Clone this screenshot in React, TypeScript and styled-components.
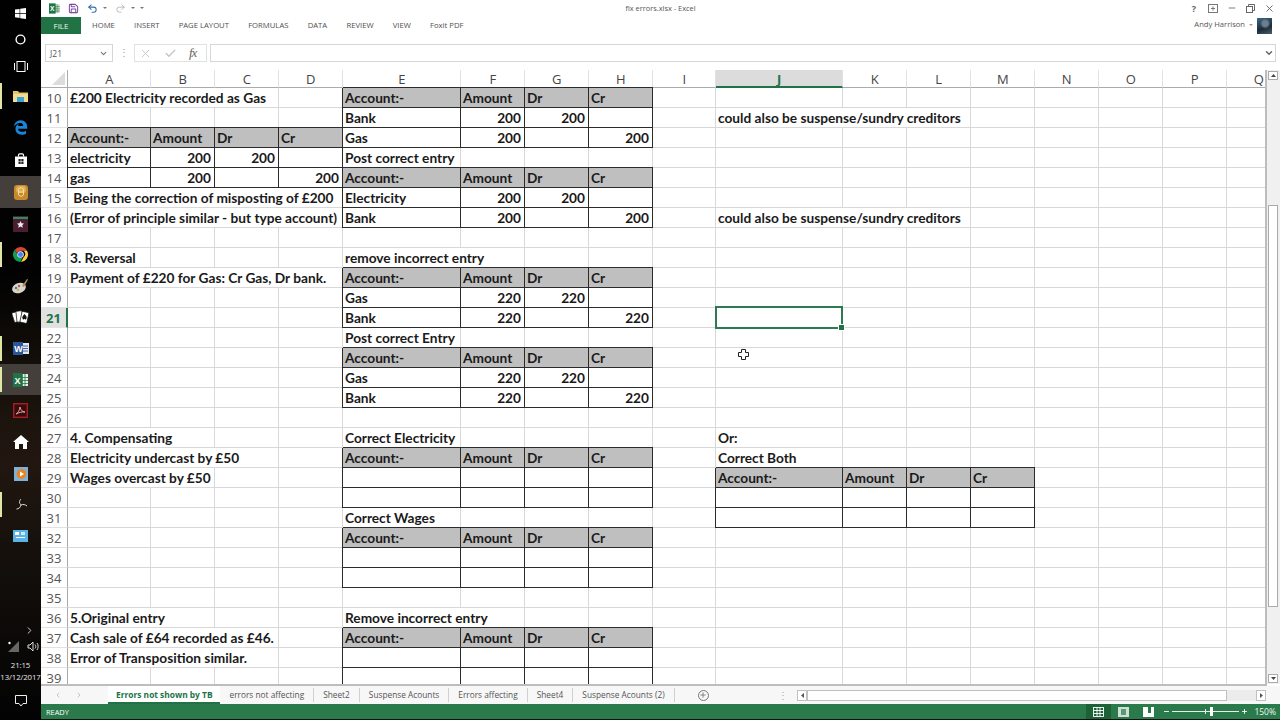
import React from "react";
import styled, { createGlobalStyle } from "styled-components";
import { Undo2, Redo2, Save, X, Check, Minus, ChevronDown, ChevronRight, ChevronLeft, Plus } from "lucide-react";
import { FaEdgeLegacy } from "react-icons/fa6";

const Global = createGlobalStyle`
  html, body { margin: 0; padding: 0; background: #fff; overflow: hidden; }
  * { box-sizing: border-box; }
`;

const Desktop = styled.div`
  width: 1280px; height: 720px; display: flex; overflow: hidden; position: relative;
  font-family: "Open Sans", "Liberation Sans", sans-serif;
`;

/* ---------- Windows taskbar ---------- */
const Taskbar = styled.aside`
  width: 41px; height: 720px; flex: none; display: flex; flex-direction: column; align-items: stretch;
  background: linear-gradient(180deg, #010101 0%, #020202 38%, #15100a 52%, #221710 64%, #120e0b 80%, #030303 100%);
  color: #fff;
`;
const Slot = styled.div<{ $h: number; $hi?: boolean; $active?: boolean }>`
  height: ${p => p.$h}px; flex: none; display: flex; align-items: center; justify-content: center; position: relative;
  background: ${p => (p.$hi ? "#443f3a" : "transparent")};
  &::before {
    content: ""; display: ${p => (p.$active ? "block" : "none")};
    position: absolute; left: 0; top: 3px; bottom: 3px; width: 2px; background: #dfe6a6;
  }
`;
const Tray = styled.div`
  margin-top: auto; display: flex; flex-direction: column; align-items: center; padding-bottom: 11px;
`;
const TrayIcons = styled.div`
  display: flex; gap: 8px; align-items: center; height: 16px; margin-bottom: 5px; margin-left: 5px;
`;
const Clock = styled.div`
  font-size: 7.8px; line-height: 12px; text-align: center; color: #e8e8e8; white-space: nowrap; letter-spacing: -0.1px;
`;
const Notify = styled.div`
  margin-top: 10px; height: 16px; display: flex; align-items: center;
`;

/* ---------- Excel window ---------- */
const Main = styled.main`
  flex: 1; min-width: 0; height: 720px; display: flex; flex-direction: column; background: #fff;
`;
const TitleBar = styled.header`
  height: 17px; padding-bottom: 1px; flex: none; display: grid; grid-template-columns: 1fr auto 1fr; align-items: center;
`;
const Qat = styled.div`
  display: flex; align-items: center; padding-left: 8px; gap: 8px;
`;
const QatCaret = styled.span`
  width: 0; height: 0; border-left: 2px solid transparent; border-right: 2px solid transparent; border-top: 2px solid #777;
  margin-left: -3px;
`;
const DocTitle = styled.div`
  font-size: 7.4px; color: #555; white-space: nowrap;
`;
const WinControls = styled.div`
  display: flex; justify-content: flex-end; align-items: center; gap: 9px; padding-right: 5px; color: #555;
`;
const WinGlyph = styled.span`
  width: 10px; height: 10px; display: flex; align-items: center; justify-content: center; font-size: 9px; font-weight: 700; color: #666;
`;
const Ribbon = styled.nav`
  height: 17px; flex: none; display: flex; align-items: center;
`;
const FileTab = styled.div`
  width: 40px; height: 17px; background: #217346; color: #e9f3ec; font-size: 8px; display: flex; align-items: center; justify-content: center;
`;
const RibbonTabs = styled.div`
  display: flex; gap: 19.2px; margin: -2px 0 0 11px;
`;
const RibbonTab = styled.span`
  font-size: 7.7px; color: #4f4f4f; white-space: nowrap;
`;
const User = styled.div`
  margin-left: auto; display: flex; align-items: center; gap: 4px; padding-right: 8px; font-size: 7.6px; color: #555;
`;
const UserName = styled.span`
  margin-top: -3px;
`;
const UserCaret = styled.span`
  width: 0; height: 0; margin-top: -2px; border-left: 2px solid transparent; border-right: 2px solid transparent; border-top: 2px solid #999;
`;
const Avatar = styled.div`
  width: 15px; height: 16px; background: radial-gradient(circle at 55% 35%, #6f7f8c 0 20%, transparent 40%), linear-gradient(160deg, #3d6a8a, #1b2a36 60%, #49606a);
`;
const FormulaBar = styled.section`
  height: 18px; margin-top: 10px; flex: none; display: flex; align-items: stretch; padding: 0 4px; background: #fff;
`;
const NameBox = styled.div`
  width: 68px; border: 1px solid #d6d6d6; display: flex; align-items: center; justify-content: space-between; padding: 0 4px; font-size: 8.5px; color: #555;
`;
const Grip = styled.div`
  width: 21px; text-align: center; color: #9a9a9a; font-size: 10px; line-height: 16px;
`;
const FxBox = styled.div`
  width: 73px; border: 1px solid #e2e2e2; display: flex; align-items: center; gap: 12px; padding: 0 0 0 4px;
`;
const FxMark = styled.span`
  font-family: "Liberation Serif", serif; font-style: italic; font-size: 13px; color: #666; letter-spacing: -1px;
`;
const FormulaInput = styled.div`
  flex: 1; margin-left: 3px; border: 1px solid #d6d6d6; display: flex; align-items: center; justify-content: flex-end; padding-right: 1px; color: #666;
`;
const SheetRow = styled.div`
  margin-top: 8px; height: 616px; flex: none; display: flex;
`;
const Sheet = styled.div`
  width: 1227px; height: 616px; overflow: hidden; display: grid; position: relative; border-right: 2px solid #bdbdbd;
  border-bottom: 2px solid #bdbdbd;
  grid-template-columns: 27px 83px 64px 64px 64px 118px 64px 64px 64px 63px 127px 64px 64px 64px 64px 64px 64px 64px;
  grid-template-rows: 18px;
  grid-auto-rows: 20px;
  font-family: Lato, "Liberation Sans", sans-serif;
`;
const Corner = styled.div`
  border-bottom: 1px solid #ababab; border-right: 1px solid #ababab; display: flex; justify-content: flex-end; align-items: flex-end; padding: 0 2px 2px 0;
`;
const Triangle = styled.div`
  width: 0; height: 0; border-left: 13px solid transparent; border-bottom: 13px solid #dcdcdc;
`;
const ColHead = styled.div<{ $sel?: boolean }>`
  display: flex; align-items: center; justify-content: center; font-family: "Open Sans", sans-serif; font-size: 13px; padding: 1px 0 0 0.5px;
  color: ${p => (p.$sel ? "#217346" : "#444")}; font-weight: ${p => (p.$sel ? 700 : 400)};
  background: ${p => (p.$sel ? "#dcdcdc" : "#fff")};
  border-right: 1px solid #e2e2e2;
  border-bottom: ${p => (p.$sel ? "2px solid #217346" : "1px solid #ababab")};
`;
const RowHead = styled.div<{ $sel?: boolean }>`
  display: flex; align-items: center; justify-content: center; font-family: "Open Sans", sans-serif; font-size: 13px;
  color: ${p => (p.$sel ? "#217346" : "#555")}; font-weight: ${p => (p.$sel ? 700 : 400)};
  background: ${p => (p.$sel ? "#e1e1e1" : "#fff")};
  border-bottom: 1px solid #e2e2e2;
  border-right: ${p => (p.$sel ? "2px solid #217346" : "1px solid #ababab")};
`;
const Cell = styled.div<{ $span: number; $box?: boolean; $fill?: boolean; $num?: boolean; $sel?: boolean }>`
  grid-column: span ${p => p.$span};
  position: relative; white-space: pre; line-height: 20px; padding: 0 ${p => (p.$num ? 3 : 2)}px 0 2px; font-weight: 700; font-size: 13.7px; color: #1a1a1a;
  text-align: ${p => (p.$num ? "right" : "left")};
  background: ${p => (p.$fill ? "#bfbfbf" : "transparent")};
  border-right: 1px solid ${p => (p.$box ? "#2b2b2b" : "#d8d8d8")};
  border-bottom: 1px solid ${p => (p.$box ? "#2b2b2b" : "#d8d8d8")};
  box-shadow: ${p => (p.$box ? "-1px 0 0 #2b2b2b, 0 -1px 0 #2b2b2b" : "none")};
  &::after {
    content: ""; display: ${p => (p.$sel ? "block" : "none")};
    position: absolute; left: -1px; right: -1px; top: -2px; bottom: -2px; border: 2px solid #2f7a52; z-index: 2;
  }
  &::before {
    content: ""; display: ${p => (p.$sel ? "block" : "none")};
    position: absolute; right: -3px; bottom: -4px; width: 5px; height: 5px; background: #217346; border: 1px solid #fff; z-index: 3;
  }
`;
const CursorMark = styled.svg`
  position: absolute; left: 738px; top: 349px; z-index: 5;
`;
const VScroll = styled.div`
  flex: 1; background: #f0f0f0; display: flex; flex-direction: column; align-items: center; padding: 1px 2px 1px 1px; margin-bottom: 2px;
`;
const VButton = styled.div`
  width: 10px; height: 9px; background: #fff; border: 1px solid #ababab; display: flex; align-items: center; justify-content: center; flex: none;
`;
const VThumb = styled.div`
  width: 10px; height: 402px; margin-top: 125px; margin-bottom: auto; background: #fff; border: 1px solid #ababab;
`;
const TabBar = styled.div`
  height: 18px; flex: none; display: flex; align-items: center; background: #f7f7f7;
`;
const TabNav = styled.div`
  width: 67px; display: flex; justify-content: center; gap: 13px; color: #aaa; padding-right: 12px; flex: none;
`;
const ActiveTab = styled.div`
  height: 18px; padding: 0 7px 0 8px; margin-right: 1px; display: flex; align-items: center; white-space: nowrap; font-size: 8.4px;
  font-weight: 700; color: #217346; background: #fff; border-bottom: 2px solid #217346;
`;
const SheetTab = styled.div`
  height: 18px; padding: 0 9px 2px; display: flex; align-items: center; white-space: nowrap; font-size: 8.3px; color: #555;
`;
const TabSep = styled.span`
  width: 1px; height: 14px; background: #d0d0d0; flex: none;
`;
const AddSheet = styled.div`
  margin-left: 23px; width: 11px; height: 11px; border-radius: 50%; border: 1px solid #777; display: flex; align-items: center; justify-content: center; color: #555;
`;
const HScrollGrip = styled.span`
  margin-left: auto; margin-right: 9px; color: #aaa; font-size: 10px; line-height: 16px;
`;
const HScroll = styled.div`
  width: 469px; height: 11px; margin-right: 14px; display: flex; align-items: stretch; background: #ececec;
`;
const HButton = styled.div`
  width: 10px; background: #fff; border: 1px solid #c0c0c0; display: flex; align-items: center; justify-content: center; color: #555; flex: none;
`;
const HThumb = styled.div`
  width: 420px; background: #fff; border: 1px solid #c0c0c0; margin-right: auto;
`;
const StatusBar = styled.footer`
  height: 15px; flex: none; background: #2a7a4b; color: #fff; display: flex; align-items: center; font-size: 7.4px; padding-left: 5px;
`;
const StatusRight = styled.div`
  margin-left: auto; display: flex; align-items: center; height: 15px; padding-right: 4px;
`;
const ViewBtn = styled.div<{ $on?: boolean }>`
  width: 25px; height: 15px; display: flex; align-items: center; justify-content: center; background: ${p => (p.$on ? "#1d6237" : "transparent")};
`;
const Zoom = styled.div`
  display: flex; align-items: center; margin-left: 2px; gap: 2px;
`;
const Track = styled.div`
  width: 67px; height: 1px; background: #e5efe8; position: relative;
`;
const Knob = styled.span`
  position: absolute; left: 38px; top: -4px; width: 3px; height: 9px; background: #fff;
`;
const Tick = styled.span`
  position: absolute; left: 33px; top: -2px; width: 1px; height: 5px; background: #e5efe8;
`;
const Percent = styled.span`
  font-size: 8.5px; margin-left: 6px; color: #f0f5f1;
`;
const BottomEdge = styled.div`
  height: 1px; flex: none; background: #111;
`;

const Win = () => (
  <svg width="11" height="11" viewBox="0 0 11 11"><path fill="#fff" d="M0 1.6 4.6.9v4.2H0zM5.2.8 11 0v5.1H5.2zM0 5.8h4.6V10L0 9.3zM5.2 5.8H11V11l-5.8-.8z" /></svg>
);
const Circle = () => (
  <svg width="11" height="11" viewBox="0 0 11 11"><circle cx="5.5" cy="5.5" r="4.4" fill="none" stroke="#fff" strokeWidth="1.4" /></svg>
);
const TaskView = () => (
  <svg width="14" height="11" viewBox="0 0 14 11" fill="none" stroke="#fff"><rect x="3" y=".5" width="8" height="10" /><path d="M.5 2v7M13.5 2v7" /></svg>
);
const Folder = () => (
  <svg width="15" height="13" viewBox="0 0 15 13"><path fill="#e7c565" d="M0 1h5l1 1.5h9V12H0z" /><path fill="#f4dc8f" d="M0 4h15v8H0z" /><path fill="#3aa6d8" d="M4 7h7v5H4z" /></svg>
);
const Store = () => (
  <svg width="14" height="14" viewBox="0 0 14 14"><path fill="none" stroke="#fff" strokeWidth="1.2" d="M4.5 3.5V2a1.2 1.2 0 0 1 1.2-1.2h2.6A1.2 1.2 0 0 1 9.500 2v1.500" /><path fill="#fff" d="M1 3.500h12V14H1z" /><path fill="#222" d="M4.500 6h2.200v2.200H4.500zM7.300 6h2.200v2.200H7.300zM4.500 8.800h2.200V11H4.500zM7.300 8.800h2.200V11H7.300z" /></svg>
);
const Honey = () => (
  <svg width="14" height="15" viewBox="0 0 14 15"><rect width="14" height="15" rx="3" fill="#c8892c" /><rect x="2" y="1" width="10" height="7" rx="3" fill="#e2ad52" /><path fill="none" stroke="#f3dc9c" d="M4.500 4 7 2.500 9.500 4v6L7 11.500 4.500 10zM4.500 7h5" /></svg>
);
const Star = () => (
  <svg width="15" height="16" viewBox="0 0 15 16"><rect width="15" height="16" fill="#4a1d33" /><rect y="1" width="15" height="2" fill="#2f8a58" /><path fill="#eee" d="M7.500 5l1 2.300 2.500.2-1.800 1.700.6 2.500-2.300-1.300-2.300 1.300.6-2.500L4 7.500l2.500-.2z" /></svg>
);
const Chrome = () => (
  <svg width="15" height="15" viewBox="0 0 24 24">
    <path fill="#db4437" d="M12 0a12 12 0 0 1 10.400 6H12a6 6 0 0 0-5.700 4L2.800 4.300A12 12 0 0 1 12 0z" />
    <path fill="#ffcd40" d="M22.400 6A12 12 0 0 1 12.700 24l4.500-8a6 6 0 0 0-.5-10z" />
    <path fill="#0f9d58" d="M2.800 4.300l5 8.700a6 6 0 0 0 7 4.400L11.800 24A12 12 0 0 1 2.800 4.300z" />
    <circle cx="12" cy="12" r="4.800" fill="#4285f4" stroke="#fff" strokeWidth="1.300" />
  </svg>
);
const Palette = () => (
  <svg width="17" height="16" viewBox="0 0 17 16"><ellipse cx="7" cy="10" rx="7" ry="5" transform="rotate(-20 7 10)" fill="#d5d5cf" /><circle cx="4" cy="10" r="1.300" fill="#3f7fc0" /><circle cx="7" cy="8" r="1.200" fill="#c94f3d" /><circle cx="6" cy="12" r="1.200" fill="#e0b040" /><path d="M10 8 15 1l1 .6L12 9z" fill="#b48a4a" /></svg>
);
const Cards = () => (
  <svg width="18" height="15" viewBox="0 0 18 15"><g stroke="#111" strokeWidth=".7" fill="#fff"><rect x="1" y="2" width="6" height="10" rx="1" transform="rotate(-18 4 7)" /><rect x="4.500" y="1" width="6" height="11" rx="1" transform="rotate(-6 7 7)" /><rect x="9" y="2" width="7" height="11" rx="1" transform="rotate(12 13 7)" /></g><path d="M12.500 4c1.500 2 3 3 1.800 5-.8 1-1.500.3-1.800-.2-.3.500-1 1.200-1.800.2-1.200-2 .300-3 1.800-5z" fill="#111" /></svg>
);
const OfficeText = styled.text`
  font-family: "Liberation Sans", sans-serif; font-size: 9px; font-weight: 700; fill: #fff;
`;
const Word = () => (
  <svg width="16" height="15" viewBox="0 0 16 15"><rect x="8" y="2" width="8" height="11" fill="#dfe7f2" /><path d="M10 5h5M10 7.500h5M10 10h5" stroke="#3f68a6" /><rect y="1" width="10" height="13" fill="#2b579a" /><OfficeText x="1.300" y="11">W</OfficeText></svg>
);
const Excel = ({ small }: { small?: boolean }) => (
  <svg width={small ? 11 : 15} height={small ? 11 : 14} viewBox="0 0 15 14"><rect x="7" y="1" width="8" height="12" fill="#e5f0ea" /><path d="M9.500 1v12M12 1v12M7 4.500h8M7 7.500h8M7 10.500h8" stroke="#217346" strokeWidth=".8" /><rect y="0" width="9" height="14" fill="#217346" /><OfficeText x="1.500" y="10.500">X</OfficeText></svg>
);
const Pdf = () => (
  <svg width="15" height="15" viewBox="0 0 15 15"><rect x=".7" y=".7" width="13.600" height="13.600" fill="#3a0b0d" stroke="#a31f24" strokeWidth="1.400" /><path d="M3 11c2-1 3.500-3.500 4-7 .5 3 2 4.500 5 5-3-.2-6 .3-9 2z" fill="none" stroke="#e9a0a0" /></svg>
);
const Home = () => (
  <svg width="16" height="14" viewBox="0 0 16 14"><path fill="#fff" d="M8 0 16 7h-2v7h-4V9H6v5H2V7H0z" /></svg>
);
const Player = () => (
  <svg width="14" height="14" viewBox="0 0 14 14"><rect width="14" height="14" fill="#7fb0d8" /><circle cx="7.500" cy="7" r="4.800" fill="#e8841f" /><path d="M6 4.500 10 7 6 9.500z" fill="#fff" /></svg>
);
const Swirl = () => (
  <svg width="14" height="14" viewBox="0 0 14 14" fill="none" stroke="#ddd"><path d="M7 7C5 5 5 3 7 1M7 7c2.500-1 4-.5 6 1M7 7c-.5 2.500-2.500 4-4.500 4" /></svg>
);
const Monitor = () => (
  <svg width="15" height="12" viewBox="0 0 15 12"><rect width="15" height="12" fill="#5ab4e6" /><rect x="2" y="2" width="4" height="3" fill="#fff" /><rect x="8" y="2" width="4" height="3" fill="#cde8f8" /><rect x="3" y="7" width="9" height="1" fill="#fff" /></svg>
);

const apps: { h: number; hi?: boolean; active?: boolean; el: React.ReactNode }[] = [
  { h: 26, el: <Win /> },
  { h: 27, el: <Circle /> },
  { h: 27, el: <TaskView /> },
  { h: 32, active: true, el: <Folder /> },
  { h: 31, el: <FaEdgeLegacy size={15} color="#1b84d8" /> },
  { h: 33, el: <Store /> },
  { h: 32, hi: true, el: <Honey /> },
  { h: 31, el: <Star /> },
  { h: 31, active: true, el: <Chrome /> },
  { h: 31, el: <Palette /> },
  { h: 32, el: <Cards /> },
  { h: 31, active: true, el: <Word /> },
  { h: 31, hi: true, active: true, el: <Excel /> },
  { h: 31, el: <Pdf /> },
  { h: 32, el: <Home /> },
  { h: 31, el: <Player /> },
  { h: 31, active: true, el: <Swirl /> },
  { h: 31, el: <Monitor /> },
];

type C = [number, string?, { s?: number; box?: boolean; fill?: boolean; num?: boolean }?];
const H = (st: number): C[] => [
  [st, "Account:-", { box: true, fill: true }], [st + 1, "Amount", { box: true, fill: true }],
  [st + 2, "Dr", { box: true, fill: true }], [st + 3, "Cr", { box: true, fill: true }],
];
const B = (st: number, name: string, a: string, dr: string, cr: string): C[] => [
  [st, name, { box: true }], [st + 1, a, { box: true, num: true }],
  [st + 2, dr, { box: true, num: true }], [st + 3, cr, { box: true, num: true }],
];
const T = (c: number, t: string, s = 1): C => [c, t, { s }];
const ALSO = "could also be suspense/sundry creditors";

const rows: Record<number, C[]> = {
  10: [T(1, "£200 Electricity recorded as Gas", 3), ...H(5)],
  11: [...B(5, "Bank", "200", "200", ""), T(10, ALSO, 3)],
  12: [...H(1), ...B(5, "Gas", "200", "", "200")],
  13: [...B(1, "electricity", "200", "200", ""), T(5, "Post correct entry", 1)],
  14: [...B(1, "gas", "200", "", "200"), ...H(5)],
  15: [T(1, " Being the correction of misposting of £200", 4), ...B(5, "Electricity", "200", "200", "")],
  16: [T(1, "(Error of principle similar - but type account)", 4), ...B(5, "Bank", "200", "", "200"), T(10, ALSO, 3)],
  18: [T(1, "3. Reversal"), T(5, "remove incorrect entry", 2)],
  19: [T(1, "Payment of £220 for Gas: Cr Gas, Dr bank.", 4), ...H(5)],
  20: B(5, "Gas", "220", "220", ""),
  21: B(5, "Bank", "220", "", "220"),
  22: [T(5, "Post correct Entry")],
  23: H(5),
  24: B(5, "Gas", "220", "220", ""),
  25: B(5, "Bank", "220", "", "220"),
  27: [T(1, "4. Compensating", 2), T(5, "Correct Electricity"), T(10, "Or:")],
  28: [T(1, "Electricity undercast by £50", 3), ...H(5), T(10, "Correct Both")],
  29: [T(1, "Wages overcast by £50", 2), ...B(5, "", "", "", ""), ...H(10)],
  30: [...B(5, "", "", "", ""), ...B(10, "", "", "", "")],
  31: [T(5, "Correct Wages"), ...B(10, "", "", "", "")],
  32: H(5),
  33: B(5, "", "", "", ""),
  34: B(5, "", "", "", ""),
  36: [T(1, "5.Original entry", 2), T(5, "Remove incorrect entry", 2)],
  37: [T(1, "Cash sale of £64 recorded as £46.", 3), ...H(5)],
  38: [T(1, "Error of Transposition similar.", 3), ...B(5, "", "", "", "")],
  39: B(5, "", "", "", ""),
};

const letters = "ABCDEFGHIJKLMNOPQ".split("");

function rowCells(r: number) {
  const list = rows[r] ?? [];
  const out: React.ReactNode[] = [];
  for (let c = 1; c <= 17; ) {
    const d = list.find(x => x[0] === c);
    const o = d?.[2] ?? {};
    const s = o.s ?? 1;
    out.push(
      <Cell key={c} $span={s} $box={o.box} $fill={o.fill} $num={o.num} $sel={r === 21 && c === 10}>
        {d?.[1] ?? ""}
      </Cell>
    );
    c += s;
  }
  return out;
}

const tabs = ["errors not affecting", "Sheet2", "Suspense Acounts", "Errors affecting", "Sheet4", "Suspense Acounts (2)"];

export default function App() {
  const rowNums = Array.from({ length: 30 }, (_, i) => i + 10);
  return (
    <Desktop>
      <Global />
      <Taskbar>
        {apps.map((a, i) => (
          <Slot key={i} $h={a.h} $hi={a.hi} $active={a.active}>{a.el}</Slot>
        ))}
        <Tray>
          <ChevronRight size={11} color="#ddd" style={{ marginLeft: 18, marginBottom: 2 }} />
          <TrayIcons>
            <svg width="11" height="11" viewBox="0 0 11 11"><path d="M0 11 11 0v11z" fill="#666" /><circle cx="1.500" cy="2" r="1.200" fill="#fff" /></svg>
            <svg width="12" height="11" viewBox="0 0 12 11" fill="none" stroke="#ddd"><path d="M1 4h2l3-3v9L3 7H1zM8 3.500c1 1 1 3 0 4M10 2c1.500 2 1.500 5 0 7" /></svg>
          </TrayIcons>
          <Clock>21:15<br />13/12/2017</Clock>
          <Notify>
            <svg width="12" height="12" viewBox="0 0 12 12" fill="none" stroke="#eee"><path d="M.5.500h11v8H8L6 11 4 8.500H.5z" /></svg>
          </Notify>
        </Tray>
      </Taskbar>
      <Main>
        <TitleBar>
          <Qat>
            <Excel small />
            <Save size={11} color="#7b4a9e" strokeWidth={2.2} />
            <Undo2 size={11} color="#2f6fb0" strokeWidth={2.2} />
            <QatCaret />
            <Redo2 size={11} color="#b5b5b5" strokeWidth={2} />
            <QatCaret />
            <QatCaret />
          </Qat>
          <DocTitle>fix errors.xlsx - Excel</DocTitle>
          <WinControls>
            <WinGlyph>?</WinGlyph>
            <svg width="10" height="9" viewBox="0 0 10 9" fill="none" stroke="#777"><rect x=".5" y=".5" width="9" height="8" /><path d="M5 2.500v4M3 4.500h4" /></svg>
            <Minus size={10} color="#666" />
            <svg width="9" height="9" viewBox="0 0 9 9" fill="none" stroke="#666"><rect x=".5" y="2.500" width="6" height="6" /><path d="M2.500 2.500v-2h6v6h-2" /></svg>
            <X size={11} color="#666" />
          </WinControls>
        </TitleBar>
        <Ribbon>
          <FileTab>FILE</FileTab>
          <RibbonTabs>
            {["HOME", "INSERT", "PAGE LAYOUT", "FORMULAS", "DATA", "REVIEW", "VIEW", "Foxit PDF"].map(t => (
              <RibbonTab key={t}>{t}</RibbonTab>
            ))}
          </RibbonTabs>
          <User><UserName>Andy Harrison</UserName><UserCaret /><Avatar /></User>
        </Ribbon>
        <FormulaBar>
          <NameBox>J21<ChevronDown size={9} color="#777" strokeWidth={3} /></NameBox>
          <Grip>⋮</Grip>
          <FxBox>
            <X size={13} color="#c4c4c4" strokeWidth={1.6} />
            <Check size={13} color="#c4c4c4" strokeWidth={2.4} />
            <FxMark>fx</FxMark>
          </FxBox>
          <FormulaInput><ChevronDown size={10} color="#666" strokeWidth={3.5} /></FormulaInput>
        </FormulaBar>
        <SheetRow>
          <Sheet>
            <Corner><Triangle /></Corner>
            {letters.map(l => <ColHead key={l} $sel={l === "J"}>{l}</ColHead>)}
            {rowNums.map(r => (
              <React.Fragment key={r}>
                <RowHead $sel={r === 21}>{r}</RowHead>
                {rowCells(r)}
              </React.Fragment>
            ))}
          </Sheet>
          <VScroll>
            <VButton><svg width="5" height="3" viewBox="0 0 5 3"><path d="M2.500 0 5 3H0z" fill="#444" /></svg></VButton>
            <VThumb />
            <VButton><svg width="5" height="3" viewBox="0 0 5 3"><path d="M0 0h5L2.500 3z" fill="#444" /></svg></VButton>
          </VScroll>
        </SheetRow>
        <TabBar>
          <TabNav><ChevronLeft size={8} /><ChevronRight size={8} /></TabNav>
          <ActiveTab>Errors not shown by TB</ActiveTab>
          {tabs.map(t => (
            <React.Fragment key={t}>
              <SheetTab>{t}</SheetTab>
              <TabSep />
            </React.Fragment>
          ))}
          <AddSheet><Plus size={8} /></AddSheet>
          <HScrollGrip>⋮</HScrollGrip>
          <HScroll>
            <HButton><svg width="3" height="5" viewBox="0 0 3 5"><path d="M3 0v5L0 2.500z" fill="#555" /></svg></HButton>
            <HThumb />
            <HButton><svg width="3" height="5" viewBox="0 0 3 5"><path d="M0 0v5l3-2.500z" fill="#555" /></svg></HButton>
          </HScroll>
        </TabBar>
        <StatusBar>
          READY
          <StatusRight>
            <ViewBtn $on><svg width="11" height="10" viewBox="0 0 11 10" fill="none" stroke="#fff" strokeWidth=".9"><rect x=".5" y=".5" width="10" height="9" /><path d="M4 .5v9M7 .5v9M.5 3.500h10M.5 6.500h10" /></svg></ViewBtn>
            <ViewBtn><svg width="11" height="10" viewBox="0 0 11 10"><rect width="11" height="10" fill="#cfe0d5" /><rect x="3" y="2" width="5" height="6" fill="#5f9677" /></svg></ViewBtn>
            <ViewBtn><svg width="11" height="10" viewBox="0 0 11 10"><rect width="11" height="10" fill="#fff" /><rect x="5" y="0" width="3" height="6" fill="#2a7a4b" /></svg></ViewBtn>
            <Zoom>
              <Minus size={7} color="#fff" strokeWidth={3} />
              <Track><Tick /><Knob /></Track>
              <Plus size={7} color="#fff" strokeWidth={3} />
            </Zoom>
            <Percent>150%</Percent>
          </StatusRight>
        </StatusBar>
        <BottomEdge />
      </Main>
      <CursorMark width="11" height="11" viewBox="0 0 11 11">
        <path d="M3.500.5h4v3h3v4h-3v3h-4v-3h-3v-4h3z" fill="#fff" stroke="#222" />
      </CursorMark>
    </Desktop>
  );
}
